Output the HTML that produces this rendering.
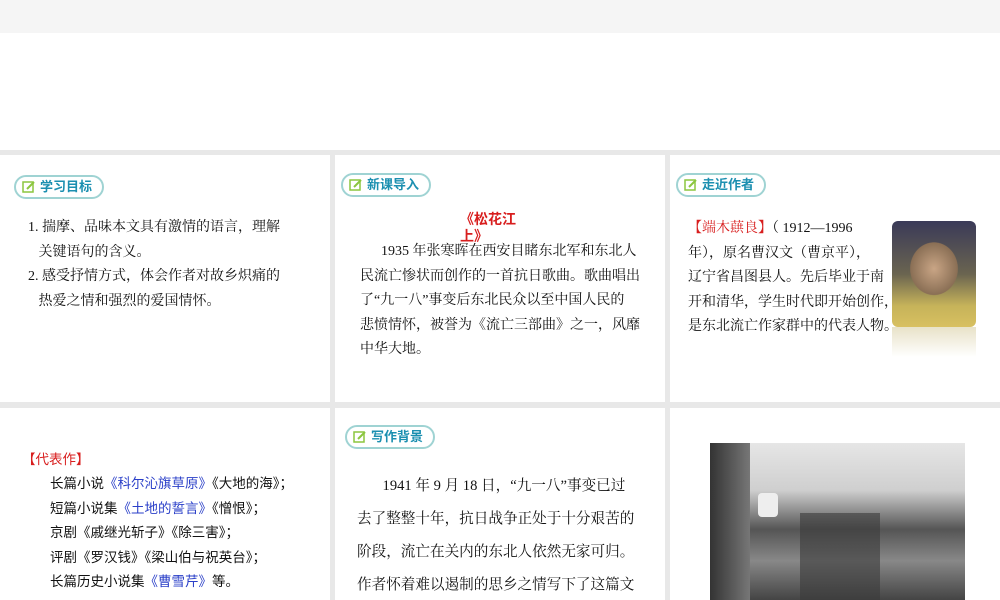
<!DOCTYPE html>
<html><head><meta charset="utf-8"><style>
*{margin:0;padding:0;box-sizing:border-box}
body{width:1000px;height:600px;overflow:hidden;background:#e8e8e8;font-family:"Liberation Serif","Noto Serif CJK SC",serif;color:#111;position:relative}
.top{position:absolute;left:0;top:0;width:1000px;height:33px;background:#f5f5f5}
.top2{position:absolute;left:0;top:33px;width:1000px;height:117px;background:#fff}
.p{position:absolute;background:#fff;overflow:hidden}
.tag{position:absolute;height:24px;border:2px solid #9fd3d3;border-radius:12px;background:#fff;font-family:"Liberation Sans","Noto Sans CJK SC",sans-serif;font-weight:bold;font-size:13px;color:#1b8fb0;line-height:20px;padding:0 10px 0 24px}
.tag svg{position:absolute;left:6px;top:3px}
.t{position:absolute;font-size:14px;line-height:24.5px;white-space:nowrap}
.red{color:#d81e1e}.blue{color:#2a3fc8}
</style></head><body>
<div class="top"></div><div class="top2"></div>

<div class="p" style="left:0;top:155px;width:330px;height:247px">
<div class="tag" style="left:14px;top:20px"><svg width="14" height="14" viewBox="0 0 14 14"><rect x="1" y="2" width="10" height="10" fill="none" stroke="#8cc63f" stroke-width="1.5"/><path d="M5 9 L12 2" stroke="#8cc63f" stroke-width="2"/></svg>学习目标</div>
<div class="t" style="left:28px;top:61px">1. 揣摩、品味本文具有激情的语言，理解<br>&nbsp;&nbsp;&nbsp;关键语句的含义。<br>2. 感受抒情方式，体会作者对故乡炽痛的<br>&nbsp;&nbsp;&nbsp;热爱之情和强烈的爱国情怀。</div>
</div>

<div class="p" style="left:335px;top:155px;width:330px;height:247px">
<div class="tag" style="left:6px;top:18px"><svg width="14" height="14" viewBox="0 0 14 14"><rect x="1" y="2" width="10" height="10" fill="none" stroke="#8cc63f" stroke-width="1.5"/><path d="M5 9 L12 2" stroke="#8cc63f" stroke-width="2"/></svg>新课导入</div>
<div style="position:absolute;left:125px;top:56px;width:60px;font-family:'Liberation Sans','Noto Sans CJK SC',sans-serif;font-weight:bold;font-size:14px;line-height:17px;color:#d81e1e">《松花江上》</div>
<div class="t" style="left:25px;top:85px">&nbsp;&nbsp;&nbsp;&nbsp;&nbsp;&nbsp;1935 年张寒晖在西安目睹东北军和东北人<br>民流亡惨状而创作的一首抗日歌曲。歌曲唱出<br>了“九一八”事变后东北民众以至中国人民的<br>悲愤情怀，被誉为《流亡三部曲》之一，风靡<br>中华大地。</div>
</div>

<div class="p" style="left:670px;top:155px;width:330px;height:247px">
<div class="tag" style="left:6px;top:18px"><svg width="14" height="14" viewBox="0 0 14 14"><rect x="1" y="2" width="10" height="10" fill="none" stroke="#8cc63f" stroke-width="1.5"/><path d="M5 9 L12 2" stroke="#8cc63f" stroke-width="2"/></svg>走近作者</div>
<div class="t" style="left:18px;top:62px"><span class="red">【端木蕻良】</span>（ 1912—1996<br>年），原名曹汉文（曹京平），<br>辽宁省昌图县人。先后毕业于南<br>开和清华，学生时代即开始创作，<br>是东北流亡作家群中的代表人物。</div>
<div style="position:absolute;left:222px;top:66px;width:84px;height:106px;border-radius:6px;background:radial-gradient(ellipse 40% 35% at 50% 45%,#c9a585,#8a6f55 70%,transparent 72%),linear-gradient(180deg,#3a3a58 0%,#6a6450 50%,#c6b35a 80%,#d8c060 100%)"></div>
<div style="position:absolute;left:222px;top:172px;width:84px;height:30px;background:linear-gradient(180deg,#e8e2c8,#fff)"></div>
</div>

<div class="p" style="left:0;top:408px;width:330px;height:192px">
<div class="t" style="left:22px;top:40px;font-size:13.5px;font-family:'Liberation Sans','Noto Sans CJK SC',sans-serif"><span class="red">【代表作】</span></div>
<div class="t" style="left:50px;top:64px;font-size:13.5px;font-family:'Liberation Sans','Noto Sans CJK SC',sans-serif;line-height:24.5px">长篇小说<span class="blue">《科尔沁旗草原》</span>《大地的海》；<br>短篇小说集<span class="blue">《土地的誓言》</span>《憎恨》；<br>京剧《戚继光斩子》《除三害》；<br>评剧《罗汉钱》《梁山伯与祝英台》；<br>长篇历史小说集<span class="blue">《曹雪芹》</span>等。</div>
</div>

<div class="p" style="left:335px;top:408px;width:330px;height:192px">
<div class="tag" style="left:10px;top:17px"><svg width="14" height="14" viewBox="0 0 14 14"><rect x="1" y="2" width="10" height="10" fill="none" stroke="#8cc63f" stroke-width="1.5"/><path d="M5 9 L12 2" stroke="#8cc63f" stroke-width="2"/></svg>写作背景</div>
<div class="t" style="left:22px;top:62px;font-size:14.6px;line-height:33px">&nbsp;&nbsp;&nbsp;&nbsp;&nbsp;&nbsp;&nbsp;1941 年 9 月 18 日，“九一八”事变已过<br>去了整整十年，抗日战争正处于十分艰苦的<br>阶段，流亡在关内的东北人依然无家可归。<br>作者怀着难以遏制的思乡之情写下了这篇文</div>
</div>

<div class="p" style="left:670px;top:408px;width:330px;height:192px">
<div style="position:absolute;left:40px;top:35px;width:255px;height:157px;background:linear-gradient(180deg,#e6e6e6 0%,#cfcfcf 30%,#555 55%,#888 75%,#444 100%)">
<div style="position:absolute;left:0;top:0;width:40px;height:157px;background:linear-gradient(90deg,#333,#777)"></div>
<div style="position:absolute;left:90px;top:70px;width:80px;height:87px;background:#3a3a3a;opacity:.6"></div>
<div style="position:absolute;left:48px;top:50px;width:20px;height:24px;background:#eee;border-radius:4px"></div>
</div>
</div>
</body></html>
